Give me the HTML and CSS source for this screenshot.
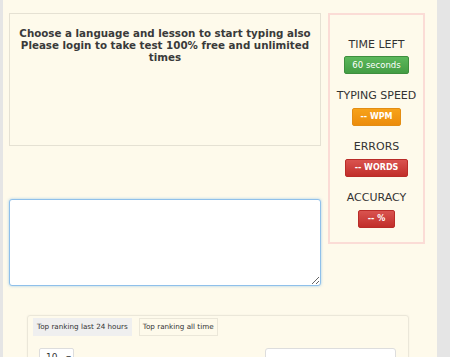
FILE: index.html
```html
<!DOCTYPE html>
<html lang="en">
<head>
  <meta charset="UTF-8">
  <title>Typing test</title>
  <link rel="stylesheet" href="styles.css">
</head>
<body>

<div class="page">
  <div class="top-row">
    <div class="left-col">
      <div class="lesson-box">
        <h4>Choose a language and lesson to start typing also Please login to take test 100% free and unlimited times</h4>
      </div>
      <textarea class="typing-area"></textarea>
    </div>

    <div class="stats">
      <div class="stat">
        <p>TIME LEFT</p>
        <span class="badge badge-green">60 seconds</span>
      </div>
      <div class="stat">
        <p>TYPING SPEED</p>
        <span class="badge badge-orange">-- WPM</span>
      </div>
      <div class="stat">
        <p>ERRORS</p>
        <span class="badge badge-red">-- WORDS</span>
      </div>
      <div class="stat">
        <p>ACCURACY</p>
        <span class="badge badge-red">-- %</span>
      </div>
    </div>
  </div>

  <div class="ranking">
    <div class="tabs">
      <span class="tab active">Top ranking last 24 hours</span>
      <span class="tab">Top ranking all time</span>
    </div>
    <div class="ranking-tools">
      <span class="select">10 <i>▼</i></span>
      <input class="search" type="text">
    </div>
  </div>
</div>

</body>
</html>
```

FILE: styles.css
```css
body {
  margin: 0;
  background: #e5e5e5;
  font-family: "DejaVu Sans", Verdana, sans-serif;
  color: #333;
  height: 357px;
  overflow: hidden;
}
.page {
  margin-left: 3px;
  width: 434px;
  height: 357px;
  background: #fefaeb;
  padding-top: 13px;
  box-sizing: border-box;
}
.top-row {
  display: flex;
  align-items: flex-start;
  gap: 7px;
  padding-left: 6px;
}
.left-col {
  width: 312px;
}
.lesson-box {
  height: 133px;
  box-sizing: border-box;
  border: 1px solid #e5e1d3;
  padding-top: 13px;
}
.lesson-box h4 {
  margin: 0;
  font-size: 10.3px;
  line-height: 12px;
  text-align: center;
  color: #3a3a3a;
  padding: 0 4px;
}
.typing-area {
  display: block;
  margin-top: 53px;
  width: 312px;
  height: 87px;
  box-sizing: border-box;
  border: 1px solid #8fc0ea;
  border-radius: 3px;
  box-shadow: 0 0 3px rgba(102,175,233,0.6);
  background: white;
  resize: vertical;
}
.stats {
  width: 97px;
  height: 231px;
  box-sizing: border-box;
  border: 2px solid #fbdcd6;
  padding-top: 23px;
  text-align: center;
}
.stat {
  height: 51px;
}
.stat p {
  margin: 0 0 2px;
  font-size: 11px;
  line-height: 13px;
  color: #333;
}
.badge {
  display: inline-block;
  padding: 0 8px;
  height: 16px;
  line-height: 16px;
  font-size: 8px;
  font-weight: bold;
  color: white;
  border-radius: 2px;
}
.badge-green {
  background: linear-gradient(#5cb85c, #449d44);
  border: 1px solid #3e8f3e;
  font-size: 8.5px;
  font-weight: normal;
  padding: 0 7px;
}
.badge-orange {
  background: linear-gradient(#f7a21a, #ec8c0c);
  border: 1px solid #e38d13;
  padding: 0 7px;
}
.badge-red {
  background: linear-gradient(#d9534f, #c12e2a);
  border: 1px solid #b92c28;
  padding: 0 9px;
}
.ranking {
  margin: 29px 0 0 24px;
  width: 382px;
  height: 60px;
  box-sizing: border-box;
  border: 1px solid #ebe7d9;
  border-radius: 3px;
  box-shadow: 0 0 2px rgba(0,0,0,0.05);
  padding: 2px 5px;
}
.tabs {
  display: flex;
  gap: 7px;
}
.tab {
  font-size: 7.2px;
  line-height: 16px;
  padding: 0 3px;
  border: 1px solid #ebe7d9;
  color: #333;
}
.tab.active {
  background: #efefef;
  border-color: #efefef;
}
.ranking-tools {
  display: flex;
  justify-content: space-between;
  margin-top: 12px;
  padding: 0 7px 0 6px;
}
.select {
  display: inline-block;
  width: 35px;
  height: 18px;
  box-sizing: border-box;
  background: white;
  border: 1px solid #ddd;
  border-radius: 2px;
  font-size: 9px;
  line-height: 16px;
  padding-left: 6px;
}
.select i {
  font-style: normal;
  font-size: 6px;
  margin-left: 6px;
}
.search {
  width: 131px;
  height: 18px;
  box-sizing: border-box;
  border: 1px solid #ddd;
  border-radius: 3px;
  background: white;
}
```
